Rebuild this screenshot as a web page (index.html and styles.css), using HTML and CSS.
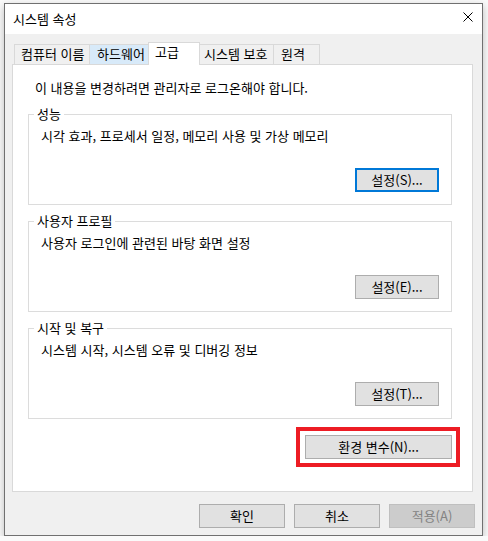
FILE: index.html
```html
<!DOCTYPE html>
<html lang="ko">
<head>
    <meta charset="UTF-8">
    <meta name="viewport" content="width=device-width, initial-scale=1.0">
    <title>시스템 속성</title>
    <link rel="stylesheet" href="styles.css">
</head>
<body>
    <div class="window">
        <div class="titlebar">
            <span class="title">시스템 속성</span>
            <button class="close-btn" aria-label="닫기">
                <svg width="10" height="10" viewBox="0 0 10 10">
                    <path d="M0.5 0.5L9.5 9.5M9.5 0.5L0.5 9.5" stroke="#000" stroke-width="1" fill="none"/>
                </svg>
            </button>
        </div>

        <div class="dialog-body">
            <div class="tabs">
                <div class="tab tab-name">컴퓨터 이름</div>
                <div class="tab tab-hw tab-hover">하드웨어</div>
                <div class="tab tab-adv tab-active">고급</div>
                <div class="tab tab-protect">시스템 보호</div>
                <div class="tab tab-remote">원격</div>
            </div>

            <div class="panel">
                <p class="intro">이 내용을 변경하려면 관리자로 로그온해야 합니다.</p>

                <div class="group">
                    <span class="group-title">성능</span>
                    <p class="group-desc">시각 효과, 프로세서 일정, 메모리 사용 및 가상 메모리</p>
                    <button class="btn btn-group btn-focus">설정(S)...</button>
                </div>

                <div class="group">
                    <span class="group-title">사용자 프로필</span>
                    <p class="group-desc">사용자 로그인에 관련된 바탕 화면 설정</p>
                    <button class="btn btn-group">설정(E)...</button>
                </div>

                <div class="group">
                    <span class="group-title">시작 및 복구</span>
                    <p class="group-desc">시스템 시작, 시스템 오류 및 디버깅 정보</p>
                    <button class="btn btn-group">설정(T)...</button>
                </div>

                <div class="env-row">
                    <div class="highlight">
                        <button class="btn btn-env">환경 변수(N)...</button>
                    </div>
                </div>
            </div>

            <div class="footer">
                <button class="btn btn-footer">확인</button>
                <button class="btn btn-footer">취소</button>
                <button class="btn btn-footer" disabled>적용(A)</button>
            </div>
        </div>
    </div>
</body>
</html>
```

FILE: styles.css
```css
body {
    margin: 0;
    background: #fafafa;
    font-family: "Noto Sans CJK KR", "Noto Sans", sans-serif;
    font-size: 13px;
    color: #000;
}

.window {
    box-sizing: border-box;
    width: 479px;
    height: 533px;
    margin: 3px 0 0 4px;
    border: 1px solid #707070;
    background: #f0f0f0;
    box-shadow: 0 3px 8px rgba(0,0,0,0.25);
}

.titlebar {
    display: flex;
    align-items: center;
    height: 30px;
    padding-left: 8px;
    background: white;
}

.title {
    line-height: 16px;
}

.close-btn {
    align-self: flex-start;
    margin: 8px 9px 0 auto;
    padding: 0;
    width: 10px;
    height: 10px;
    border: none;
    background: none;
    display: flex;
}

.dialog-body {
    padding-top: 8px;
}

/* Tabs */
.tabs {
    display: flex;
    align-items: flex-end;
    height: 22px;
    margin-left: 9px;
}

.tab {
    box-sizing: border-box;
    height: 20px;
    margin-left: -1px;
    padding-left: 6px;
    border: 1px solid #d9d9d9;
    border-bottom: none;
    background: #f0f0f0;
    line-height: 18px;
    white-space: nowrap;
}

.tab:first-child {
    margin-left: 0;
}

.tab-name { width: 76px; }
.tab-hw { width: 60px; padding-left: 7px; }
.tab-adv { width: 52px; }
.tab-protect { width: 75px; padding-left: 4px; }
.tab-remote { width: 47px; padding-left: 7px; }

.tab-hover {
    background: #d8eaf9;
}

.tab-active {
    position: relative;
    height: 23px;
    margin-bottom: -1px;
    background: white;
    line-height: 17px;
}

/* Panel */
.panel {
    box-sizing: border-box;
    width: 461px;
    height: 428px;
    margin-left: 7px;
    padding: 15px 20px 0 15px;
    background: white;
    border: 1px solid #d9d9d9;
}

.intro {
    margin: 0 0 18px 7px;
    line-height: 16px;
}

.group {
    box-sizing: border-box;
    display: flex;
    flex-direction: column;
    align-items: flex-start;
    height: 91px;
    margin-bottom: 16px;
    padding: 0 12px 12px 12px;
    border: 1px solid #dcdcdc;
}

.group-title {
    margin: -9px 0 0 -7px;
    padding: 0 3px;
    background: white;
    line-height: 16px;
}

.group-desc {
    margin: 6px 0 0;
    line-height: 16px;
}

/* Buttons */
.btn {
    box-sizing: border-box;
    height: 24px;
    padding: 0;
    border: 1px solid #adadad;
    background: #e1e1e1;
    font-family: inherit;
    font-size: 13px;
    color: #000;
    line-height: 22px;
}

.btn-group {
    align-self: flex-end;
    margin-top: auto;
    width: 84px;
}

.btn-focus {
    border-color: #0078d7;
    box-shadow: inset 0 0 0 1px #0078d7;
}

.env-row {
    display: flex;
    justify-content: flex-end;
    margin-top: -8px;
}

.highlight {
    margin-right: -8px;
    padding: 4px 4px 4px 5px;
    border: 4px solid #ed1c24;
}

.btn-env {
    display: block;
    width: 147px;
}

.footer {
    display: flex;
    justify-content: flex-end;
    gap: 9px;
    margin-top: 12px;
    padding-right: 7px;
}

.btn-footer {
    width: 86px;
}

.btn-footer:disabled {
    background: #cccccc;
    border-color: #bfbfbf;
    color: #838383;
}
```
